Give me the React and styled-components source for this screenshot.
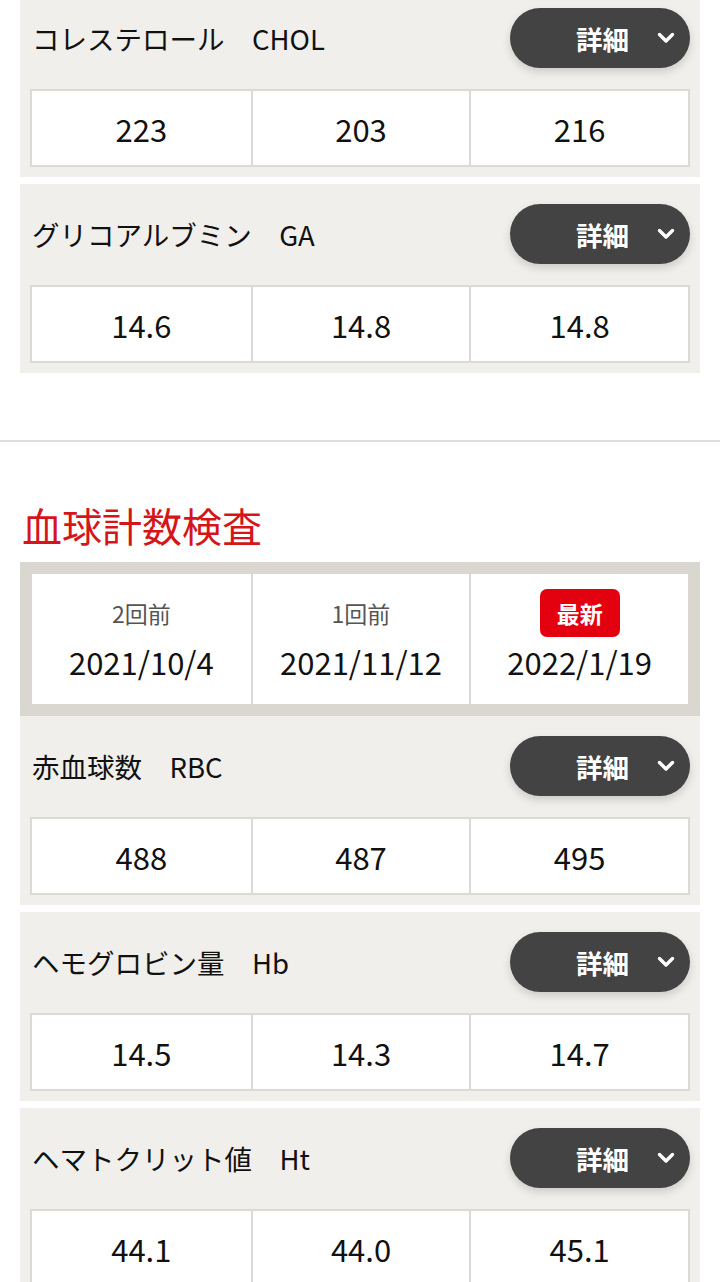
import React from 'react';
import styled, { createGlobalStyle } from 'styled-components';

const GlobalStyle = createGlobalStyle`
  body {
    margin: 0;
    background: #fff;
    font-family: "Noto Sans CJK JP", "Noto Sans", sans-serif;
    color: #111;
  }
`;

const Page = styled.div`
  margin-top: -12px;
  overflow: hidden;
`;

const Section = styled.section`
  padding: 0 20px;
`;

const Card = styled.div`
  background: #f0efeb;
  padding: 20px 10px 10px;
  margin-bottom: 7px;
`;

const CardHeader = styled.div`
  display: flex;
  align-items: center;
  justify-content: space-between;
`;

const Label = styled.div`
  font-size: 27.5px;
  font-weight: 400;
  padding-left: 2px;
  white-space: pre;
`;

const DetailButton = styled.button`
  width: 180px;
  height: 60px;
  border: none;
  border-radius: 30px;
  background: #434343;
  color: #fff;
  display: flex;
  align-items: center;
  justify-content: flex-end;
  gap: 28px;
  padding: 0 15px 0 0;
  font-family: inherit;
  font-size: 26.5px;
  font-weight: 700;
  box-shadow: 0 4px 8px rgba(0, 0, 0, 0.15);
`;

const Values = styled.div`
  display: grid;
  grid-template-columns: repeat(3, 1fr);
  margin-top: 21px;
  background: #fff;
  border: 2px solid #dcdad4;
`;

const Value = styled.div`
  height: 74px;
  display: flex;
  align-items: center;
  justify-content: center;
  font-size: 31px;
  & + & {
    border-left: 2px solid #dcdad4;
  }
`;

const Divider = styled.hr`
  border: none;
  border-top: 2px solid #dddddd;
  margin: 67px 0 0;
`;

const Heading = styled.h2`
  margin: 55px 0 9px;
  padding-left: 2px;
  font-size: 40px;
  line-height: 56px;
  font-weight: 400;
  color: #d51519;
`;

const DateHeader = styled.div`
  background: #d9d7cf;
  padding: 12px;
`;

const DateGrid = styled.div`
  display: grid;
  grid-template-columns: repeat(3, 1fr);
  background: #fff;
  height: 130px;
`;

const DateCell = styled.div`
  display: flex;
  flex-direction: column;
  align-items: center;
  padding-top: 15px;
  & + & {
    border-left: 2px solid #dcdad4;
  }
`;

const Round = styled.div`
  height: 48px;
  display: flex;
  align-items: center;
  font-size: 23px;
  color: #555;
`;

const Badge = styled.span`
  width: 80px;
  height: 48px;
  border-radius: 7px;
  background: #e3000f;
  color: #fff;
  font-size: 23px;
  font-weight: 700;
  display: flex;
  align-items: center;
  justify-content: center;
`;

const DateText = styled.div`
  font-size: 31px;
  line-height: 40px;
  margin-top: 5px;
`;

const Chevron = () => (
  <svg width="18" height="12" viewBox="0 0 18 12" fill="none">
    <path d="M2.5 2.5l6.5 6.5 6.5-6.5" stroke="#fff" strokeWidth="3.4" strokeLinecap="round" strokeLinejoin="round" />
  </svg>
);

const ItemCard = ({ label, values }) => (
  <Card>
    <CardHeader>
      <Label>{label}</Label>
      <DetailButton>
        詳細
        <Chevron />
      </DetailButton>
    </CardHeader>
    <Values>
      {values.map((v, i) => (
        <Value key={i}>{v}</Value>
      ))}
    </Values>
  </Card>
);

const lipid = [
  { label: 'コレステロール　CHOL', values: ['223', '203', '216'] },
  { label: 'グリコアルブミン　GA', values: ['14.6', '14.8', '14.8'] },
];

const blood = [
  { label: '赤血球数　RBC', values: ['488', '487', '495'] },
  { label: 'ヘモグロビン量　Hb', values: ['14.5', '14.3', '14.7'] },
  { label: 'ヘマトクリット値　Ht', values: ['44.1', '44.0', '45.1'] },
];

const dates = [
  { round: '2回前', date: '2021/10/4' },
  { round: '1回前', date: '2021/11/12' },
  { latest: true, date: '2022/1/19' },
];

export default function App() {
  return (
    <Page>
      <GlobalStyle />
      <Section>
        {lipid.map((item) => (
          <ItemCard key={item.label} {...item} />
        ))}
      </Section>
      <Divider />
      <Section>
        <Heading>血球計数検査</Heading>
        <DateHeader>
          <DateGrid>
            {dates.map((d) => (
              <DateCell key={d.date}>
                <Round>{d.latest ? <Badge>最新</Badge> : d.round}</Round>
                <DateText>{d.date}</DateText>
              </DateCell>
            ))}
          </DateGrid>
        </DateHeader>
        {blood.map((item) => (
          <ItemCard key={item.label} {...item} />
        ))}
      </Section>
    </Page>
  );
}
